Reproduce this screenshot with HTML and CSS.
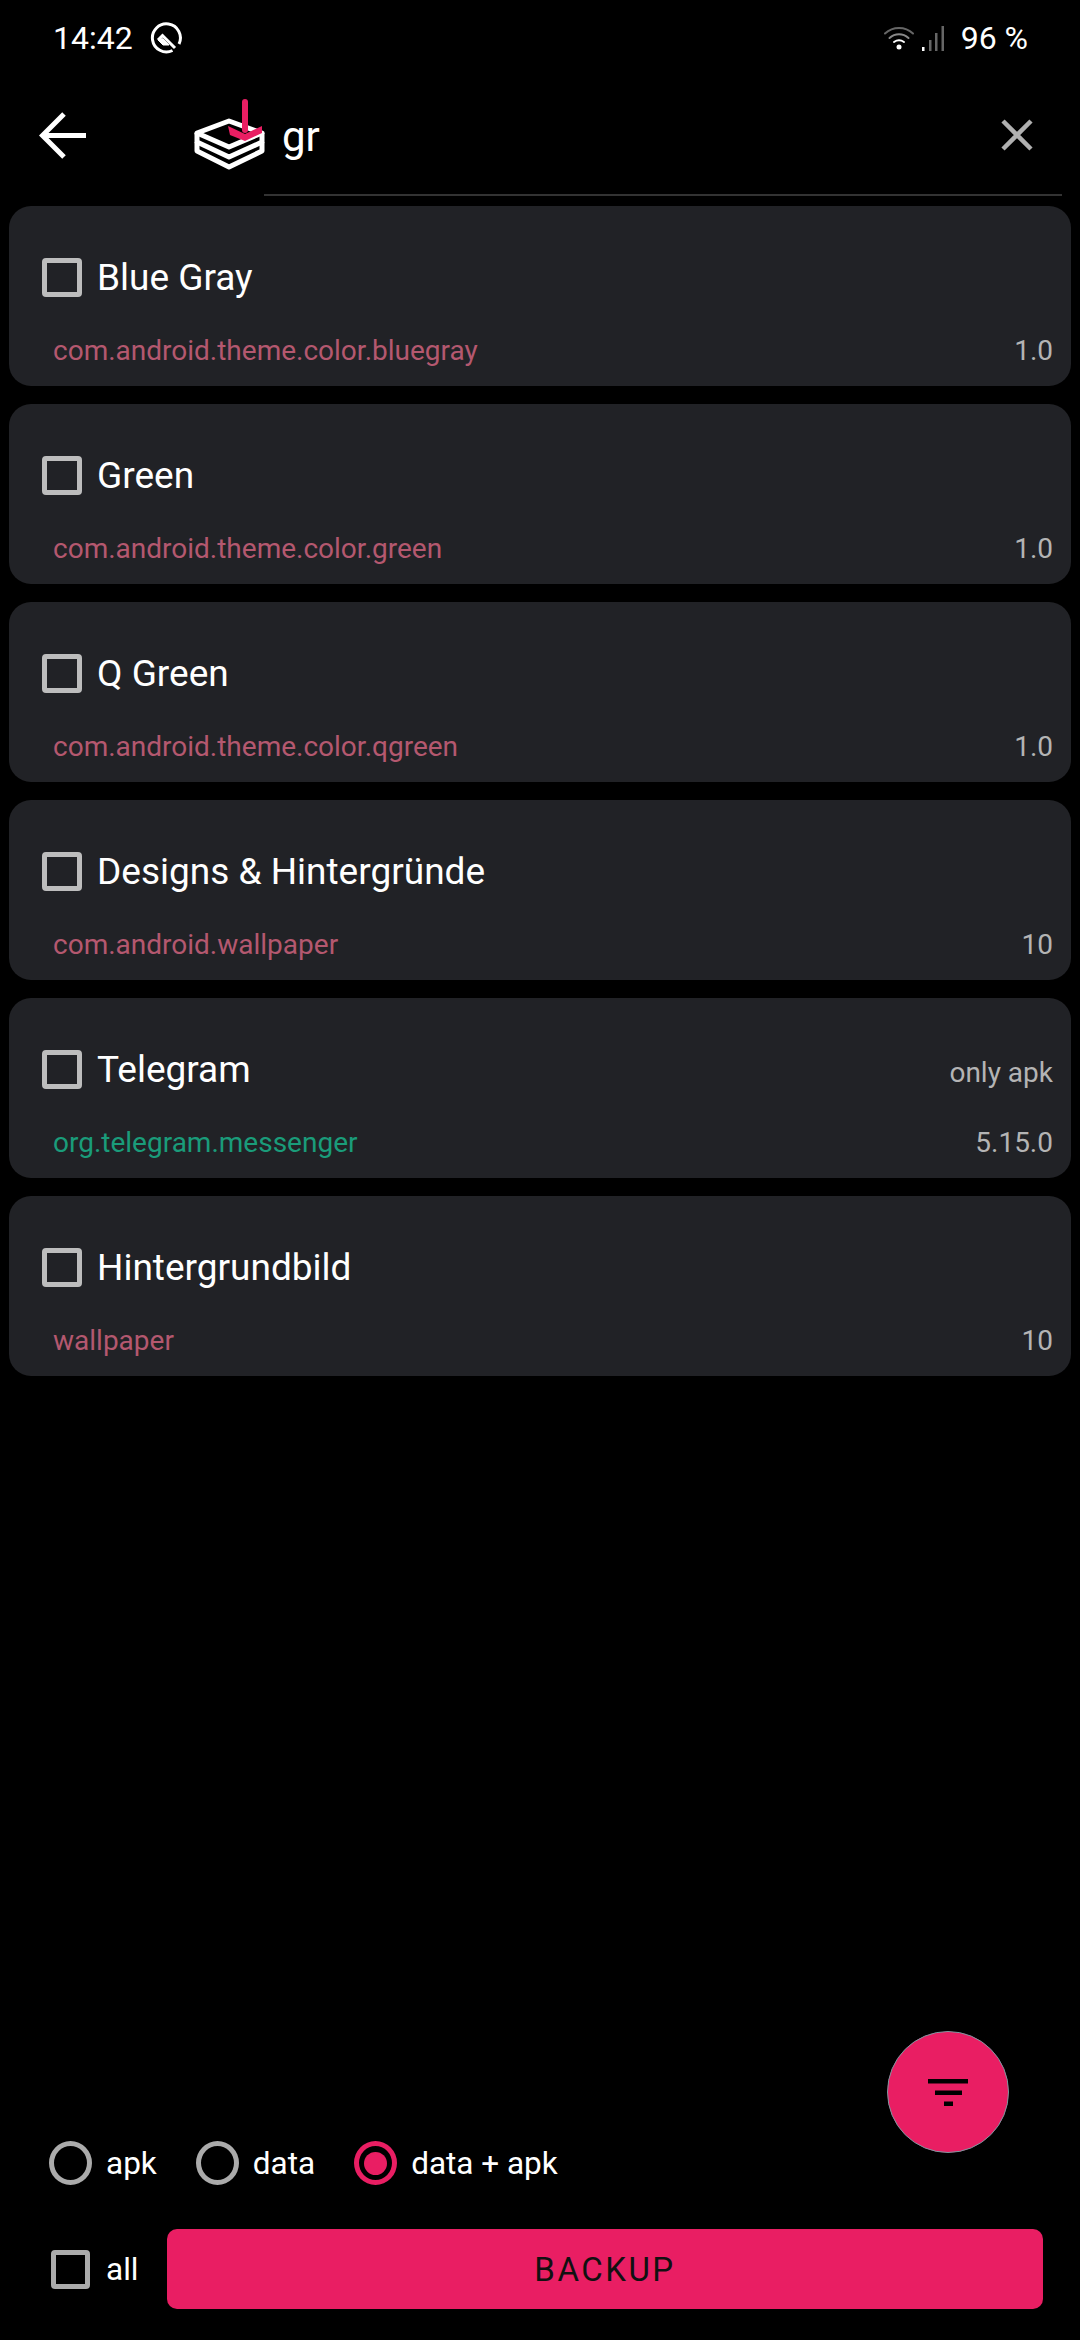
FILE: index.html
```html
<!DOCTYPE html>
<html lang="en">
<head>
  <meta charset="UTF-8">
  <meta name="viewport" content="width=device-width, initial-scale=1.0">
  <title>Backup</title>
  <link rel="stylesheet" href="styles.css">
</head>
<body>
  <div class="app">
    <div class="statusbar">
      <div class="status-left">
        <span>14:42</span>
        <svg class="status-q" width="32" height="32" viewBox="0 0 32 32" fill="none" stroke="#fff" stroke-width="3">
          <path d="M22.500 28.500A14 14 0 1 1 29 22"/>
          <path d="M8 18L12.500 13.500 25 26"/>
          <path d="M8 18L13 23H19L12.500 16.500z" fill="#fff" stroke-width="1"/>
        </svg>
      </div>
      <div class="status-right">
        <svg width="30" height="24" viewBox="0 0 30 24" fill="none" stroke-linecap="round">
          <path d="M1 7.500C9 0 21 0 29 7.500" stroke="#666" stroke-width="2"/>
          <path d="M5.500 12C11 7 19 7 24.500 12" stroke="#888" stroke-width="2"/>
          <path d="M10 16C13 14 17 14 20 16" stroke="#fff" stroke-width="2"/>
          <circle cx="15" cy="21" r="2.500" fill="#fff"/>
        </svg>
        <svg class="status-signal" width="22" height="25" viewBox="0 0 22 25">
          <rect x="0" y="21" width="2.500" height="4" fill="#fff"/>
          <rect x="7" y="14" width="2.500" height="11" fill="#666"/>
          <rect x="13" y="7" width="2.500" height="18" fill="#666"/>
          <rect x="19.500" y="0" width="2.500" height="25" fill="#666"/>
        </svg>
        <span class="status-batt">96 %</span>
      </div>
    </div>

    <div class="toolbar">
      <svg class="back-icon" width="48" height="48" viewBox="0 0 48 48" fill="none" stroke="#fff" stroke-width="5">
        <path d="M47 23.500H5"/>
        <path d="M25 2L3.500 23.500 25 45"/>
      </svg>
      <svg class="app-icon" width="72" height="72" viewBox="0 0 72 72" fill="none">
        <path d="M3 35L35 23 68 35 35 49z" stroke="#fff" stroke-width="5" stroke-linejoin="round"/>
        <path d="M3 35v9L35 59 68 44v-9" stroke="#fff" stroke-width="5" stroke-linejoin="round"/>
        <path d="M3 44v9L35 69 68 53v-9" stroke="#fff" stroke-width="5" stroke-linejoin="round"/>
        <path d="M51 4V32" stroke="#e91e63" stroke-width="6" stroke-linecap="round"/>
        <path d="M34 28L51 36 68 28V35L51 43 36 37z" fill="#e91e63"/>
      </svg>
      <div class="search-box">
        <span class="search-text">gr</span>
        <svg class="clear-icon" width="32" height="32" viewBox="0 0 32 32" stroke="#b0b0b0" stroke-width="4.500">
          <path d="M2 2L30 30M30 2L2 30"/>
        </svg>
      </div>
    </div>

    <div class="app-list">
      <div class="app-card">
        <div class="card-top"><span class="checkbox"></span><span class="app-name">Blue Gray</span></div>
        <div class="card-bottom"><span class="pkg pkg-sys">com.android.theme.color.bluegray</span><span class="meta">1.0</span></div>
      </div>
      <div class="app-card">
        <div class="card-top"><span class="checkbox"></span><span class="app-name">Green</span></div>
        <div class="card-bottom"><span class="pkg pkg-sys">com.android.theme.color.green</span><span class="meta">1.0</span></div>
      </div>
      <div class="app-card">
        <div class="card-top"><span class="checkbox"></span><span class="app-name">Q Green</span></div>
        <div class="card-bottom"><span class="pkg pkg-sys">com.android.theme.color.qgreen</span><span class="meta">1.0</span></div>
      </div>
      <div class="app-card">
        <div class="card-top"><span class="checkbox"></span><span class="app-name">Designs &amp; Hintergründe</span></div>
        <div class="card-bottom"><span class="pkg pkg-sys">com.android.wallpaper</span><span class="meta">10</span></div>
      </div>
      <div class="app-card">
        <div class="card-top"><span class="checkbox"></span><span class="app-name">Telegram</span><span class="meta only-apk">only apk</span></div>
        <div class="card-bottom"><span class="pkg pkg-user">org.telegram.messenger</span><span class="meta">5.15.0</span></div>
      </div>
      <div class="app-card">
        <div class="card-top"><span class="checkbox"></span><span class="app-name">Hintergrundbild</span></div>
        <div class="card-bottom"><span class="pkg pkg-sys">wallpaper</span><span class="meta">10</span></div>
      </div>
    </div>

    <div class="bottom-panel">
      <div class="mode-row">
        <div class="mode"><span class="radio"></span><span class="mode-label">apk</span></div>
        <div class="mode"><span class="radio"></span><span class="mode-label">data</span></div>
        <div class="mode"><span class="radio radio-on"></span><span class="mode-label">data + apk</span></div>
      </div>
      <div class="action-row">
        <div class="select-all"><span class="checkbox checkbox-small"></span><span class="mode-label">all</span></div>
        <button class="backup-btn">BACKUP</button>
      </div>
    </div>

    <div class="fab">
      <svg width="40" height="27" viewBox="0 0 40 27" fill="#000">
        <rect x="0" y="0" width="40" height="4.500"/>
        <rect x="7" y="11.500" width="27" height="4.500"/>
        <rect x="16" y="22.500" width="9" height="4.500"/>
      </svg>
    </div>
  </div>
</body>
</html>
```

FILE: styles.css
```css
* {
  box-sizing: border-box;
}
body {
  margin: 0;
  background: #000;
  font-family: Roboto, sans-serif;
  color: #fff;
}
.app {
  position: relative;
  width: 1080px;
  height: 2340px;
  display: flex;
  flex-direction: column;
  overflow: hidden;
}

/* status bar */
.statusbar {
  height: 76px;
  padding: 0 52px 0 53px;
  display: flex;
  align-items: center;
  justify-content: space-between;
  font-size: 32px;
}
.status-left,
.status-right {
  display: flex;
  align-items: center;
}
.status-q {
  margin-left: 17px;
}
.status-signal {
  margin-left: 8px;
}
.status-batt {
  margin-left: 17px;
}

/* toolbar */
.toolbar {
  height: 120px;
  display: flex;
  align-items: center;
  padding-left: 39px;
}
.app-icon {
  margin-left: 107px;
  margin-bottom: 4px;
}
.search-box {
  flex: 1;
  align-self: stretch;
  margin: 0 18px 0 -2px;
  padding: 0 29px 0 18px;
  display: flex;
  align-items: center;
  justify-content: space-between;
  border-bottom: 2px solid #333;
}
.search-text {
  font-size: 42px;
  padding-top: 2px;
}

/* list */
.app-list {
  flex: 1;
  padding: 10px 9px 0;
  display: flex;
  flex-direction: column;
  gap: 18px;
}
.app-card {
  height: 180px;
  padding: 0 18px 0 33px;
  background: #212226;
  border-radius: 22px;
}
.card-top {
  height: 118px;
  padding-top: 24px;
  display: flex;
  align-items: center;
}
.app-name {
  margin-left: 15px;
  font-size: 37px;
}
.card-bottom {
  display: flex;
  justify-content: space-between;
  align-items: center;
  padding-left: 11px;
  margin-top: 10px;
}
.pkg {
  font-size: 28px;
}
.pkg-sys {
  color: #b4586f;
}
.pkg-user {
  color: #1a9c7a;
}
.meta {
  font-size: 28px;
  color: #b4b4b4;
}
.only-apk {
  margin-left: auto;
  margin-top: 6px;
}
.checkbox {
  width: 40px;
  height: 39px;
  border: 5px solid #bdbdbd;
  border-radius: 4px;
  flex: none;
}
.checkbox-small {
  width: 39px;
  height: 39px;
  border-color: #ababab;
}

/* bottom */
.bottom-panel {
  padding: 0 37px 31px 49px;
}
.mode-row {
  display: flex;
  align-items: center;
  height: 44px;
}
.mode {
  display: flex;
  align-items: center;
  margin-right: 39px;
}
.radio {
  width: 43px;
  height: 44px;
  border: 5px solid #ababab;
  border-radius: 50%;
  flex: none;
  display: flex;
  align-items: center;
  justify-content: center;
}
.radio-on {
  border-color: #e91e63;
}
.radio-on::after {
  content: "";
  width: 23px;
  height: 23px;
  border-radius: 50%;
  background: #e91e63;
}
.mode-label {
  margin-left: 14px;
  font-size: 31.5px;
}
.action-row {
  margin-top: 44px;
  display: flex;
  align-items: center;
}
.select-all {
  width: 118px;
  display: flex;
  align-items: center;
  padding-left: 2px;
}
.select-all .mode-label {
  margin-left: 16px;
}
.backup-btn {
  flex: 1;
  height: 80px;
  border: 0;
  border-radius: 10px;
  background: #e91e63;
  color: #111;
  font-family: Roboto, sans-serif;
  font-size: 33px;
  letter-spacing: 2.500px;
  padding: 0;
}

/* filter button sits over the page */
.fab {
  position: absolute;
  left: 887px;
  top: 2031px;
  width: 122px;
  height: 122px;
  border-radius: 50%;
  background: #e91e63;
  border: 1px solid #7f97a0;
  display: flex;
  align-items: center;
  justify-content: center;
}
```
